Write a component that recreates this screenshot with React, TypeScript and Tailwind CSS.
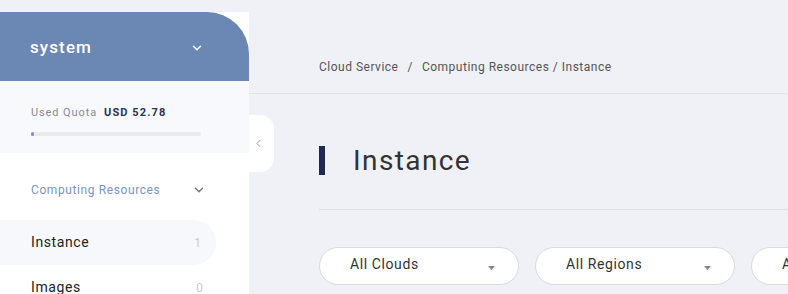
import { ChevronDown, ChevronLeft } from 'lucide-react';

const font = { fontFamily: 'Roboto, "Noto Sans", sans-serif' };

function Caret() {
  return (
    <svg width="7" height="4" viewBox="0 0 7 4" className="text-[#888]">
      <path d="M0 0h7L3.5 4z" fill="currentColor" />
    </svg>
  );
}

function Select({ label }: { label: string }) {
  return (
    <div className="flex h-[38px] w-[200px] shrink-0 items-center justify-between rounded-full border border-[#d9d9de] bg-white pb-[3px] pl-[30px] pr-[23px]">
      <span className="text-[14px] tracking-[0.6px] text-[#333]">{label}</span>
      <span className="pt-[6px]">
        <Caret />
      </span>
    </div>
  );
}

export default function App() {
  return (
    <div className="flex h-[294px] w-[788px] overflow-hidden bg-[#f0f1f7]" style={font}>
      {/* sidebar */}
      <aside className="relative z-10 mt-3 flex w-[249px] shrink-0 flex-col bg-white">
        <div className="flex h-[69px] shrink-0 items-center justify-between rounded-tr-[42px] bg-[#6b87b4] pl-[30px] pr-[45px] pt-[2px]">
          <span className="text-[17px] font-medium tracking-[1.1px] text-white">system</span>
          <ChevronDown size={14} strokeWidth={2.5} className="text-white" />
        </div>
        <div className="h-[72px] shrink-0 bg-[#f8f9fd] px-[31px] pt-[24px]">
          <div className="flex items-baseline gap-[7px] text-[11px] tracking-[0.9px]">
            <span className="text-[#8a8a8f]">Used Quota</span>
            <span className="font-bold tracking-[1.1px] text-[#2a3358]">USD 52.78</span>
          </div>
          <div className="mt-[10px] h-[4px] w-[170px] rounded-full bg-[#ebebed]">
            <div className="h-full w-[3px] rounded-full bg-[#7b93c0]" />
          </div>
        </div>
        <div className="flex h-[67px] shrink-0 items-center justify-between pl-[31px] pr-[43px] pt-[6px]">
          <span className="text-[12px] tracking-[0.6px] text-[#7b93c0]">Computing Resources</span>
          <ChevronDown size={14} strokeWidth={2.5} className="text-[#777]" />
        </div>
        <div className="flex h-[45px] w-[216px] shrink-0 items-center justify-between rounded-r-full bg-[#f7f8fc] pl-[31px] pr-[15px]">
          <span className="text-[14px] tracking-[0.6px] text-[#222]">Instance</span>
          <span className="text-[12px] text-[#c8c8cc]">1</span>
        </div>
        <div className="flex h-[45px] w-[216px] shrink-0 items-center justify-between pl-[31px] pr-[13px]">
          <span className="text-[14px] tracking-[0.6px] text-[#222]">Images</span>
          <span className="text-[12px] text-[#c8c8cc]">0</span>
        </div>
        <div className="absolute left-full top-[103px] flex h-[57px] w-[25px] items-center justify-center rounded-r-[14px] bg-white">
          <ChevronLeft size={13} strokeWidth={1.8} className="mr-[6px] text-[#999]" />
        </div>
      </aside>

      {/* main */}
      <main className="flex min-w-0 flex-1 flex-col">
        <div className="h-[94px] shrink-0 border-b border-[#e2e3ea] pl-[70px] pt-[59px]">
          <div className="flex items-center text-[12px] leading-4 tracking-[0.5px] text-[#555]">
            <span>Cloud Service</span>
            <span className="mx-[9px]">/</span>
            <span>Computing Resources / Instance</span>
          </div>
        </div>
        <div className="pl-[70px]">
          <div className="mt-[52px] flex h-[29px] items-center gap-[28px]">
            <div className="h-[29px] w-[6px] bg-[#1e2a55]" />
            <h1 className="text-[28px] tracking-[1.4px] text-[#333]">Instance</h1>
          </div>
          <div className="mt-[34px] border-t border-[#dfe0e6]" />
          <div className="mt-[37px] flex gap-[16px]">
            <Select label="All Clouds" />
            <Select label="All Regions" />
            <Select label="All Zones" />
          </div>
        </div>
      </main>
    </div>
  );
}
